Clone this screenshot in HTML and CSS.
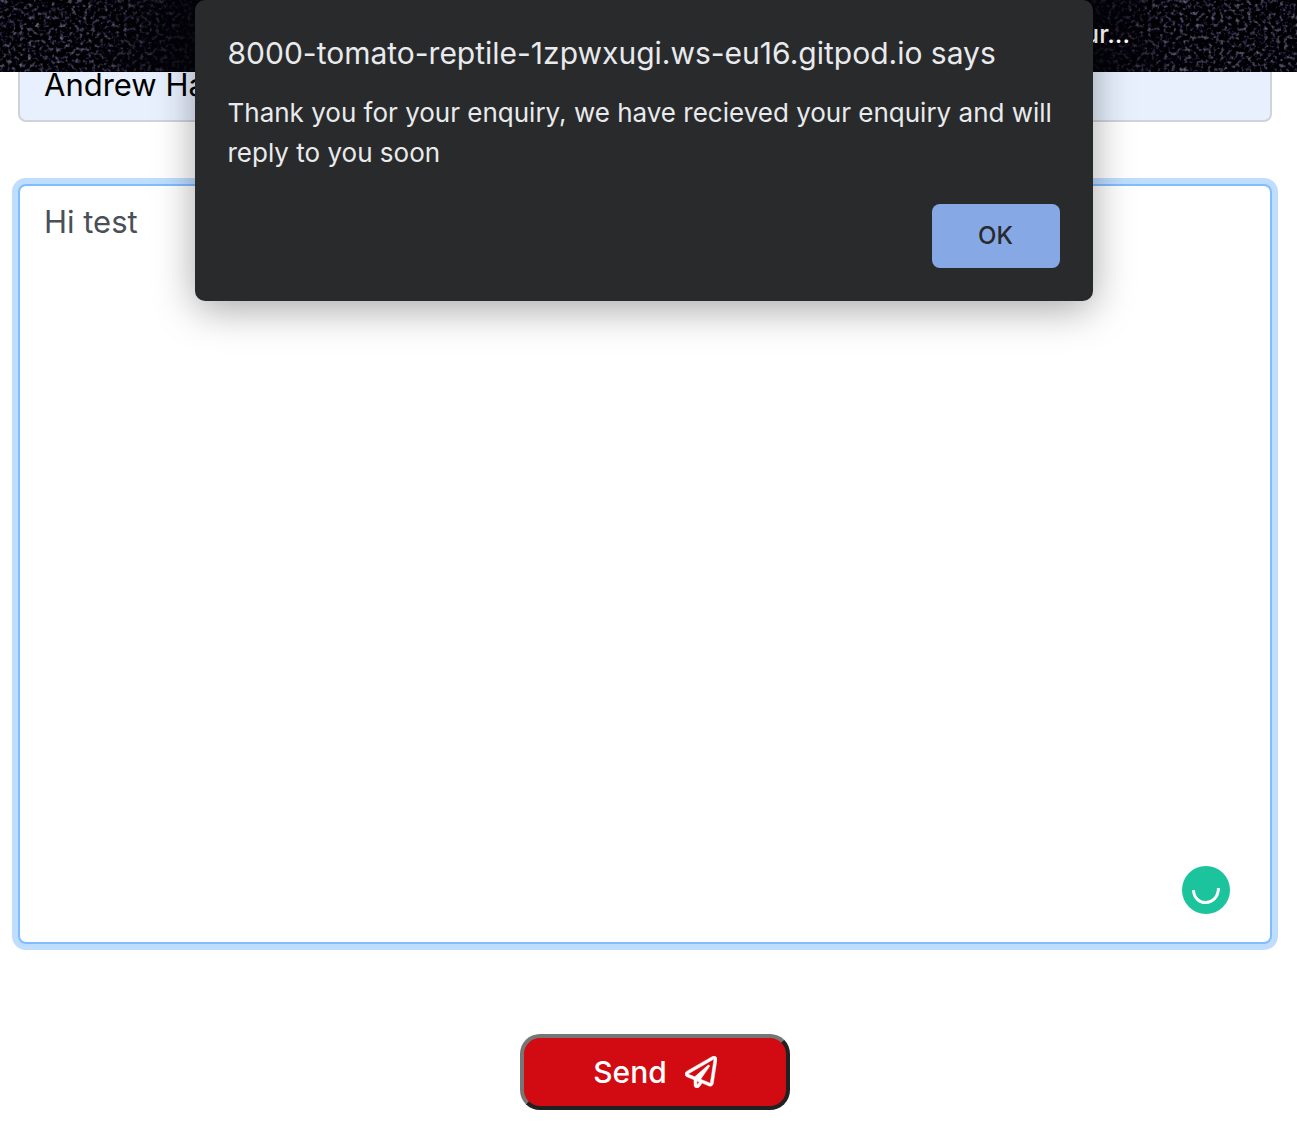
FILE: index.html
```
<!DOCTYPE html>
<html lang="en">
<head>
<meta charset="utf-8">
<meta name="viewport" content="width=device-width, initial-scale=1">
<title>Contact</title>
<link rel="stylesheet" href="styles.css">
</head>
<body>
<header class="site-header">
  <svg class="stars" aria-hidden="true">
    <filter id="grain" x="0" y="0" width="100%" height="100%" color-interpolation-filters="sRGB">
      <feTurbulence type="fractalNoise" baseFrequency="0.25" numOctaves="3" seed="8"/>
      <feColorMatrix values="1.1 0 0 0 -0.54  1.1 0 0 0 -0.55  1.1 0 0 0 -0.49  0 0 0 0 1"/>
      <feGaussianBlur stdDeviation="0.6"/>
    </filter>
    <rect width="100%" height="100%" filter="url(#grain)"/>
  </svg>
  <span class="header-text">ur...</span>
</header>
<main>
  <form class="contact-form">
    <input class="field" type="text" aria-label="Name" value="Andrew Ha">
    <div class="message">
      <textarea class="field field-message" aria-label="Message" spellcheck="false">Hi test</textarea>
      <svg class="checker" viewBox="0 0 48 48" aria-hidden="true">
        <circle cx="24" cy="24" r="24" fill="#1bc49c"/>
        <path d="M11.500 24C12 41 36 41 36.500 22" fill="none" stroke="#fff" stroke-width="3"/>
      </svg>
    </div>
    <button class="send" type="button">Send
      <svg viewBox="0 0 512 512" aria-hidden="true"><path fill="currentColor" stroke="currentColor" stroke-width="8" d="M440 6.500L24 246.400c-34.400 19.900-31.100 70.800 5.700 85.900L144 379.600V464c0 46.400 59.200 65.500 86.600 28.600l43.800-59.100 111.900 46.200c5.900 2.400 12.100 3.600 18.300 3.600 8.200 0 16.300-2.100 23.600-6.200 12.800-7.200 21.600-20 23.900-34.500l59.400-387.200c6.100-40.100-36.900-68.800-71.500-48.900zM192 464v-64.600l36.600 15.100L192 464zm212.600-28.700l-153.800-63.500L391 169.500c10.700-15.500-9.500-33.500-23.700-21.200L155.800 332.600 48 288 464 48l-59.400 387.300z"/></svg>
    </button>
  </form>
</main>
<dialog class="alert" open aria-labelledby="alert-title">
  <h1 class="alert-title" id="alert-title">8000-tomato-reptile-1zpwxugi.ws-eu16.gitpod.io says</h1>
  <p class="alert-text">Thank you for your enquiry, we have recieved your enquiry and will reply to you soon</p>
  <button class="alert-ok" type="button">OK</button>
</dialog>
</body>
</html>
```
FILE: styles.css
```
* {
  box-sizing: border-box;
}

body {
  margin: 0;
  background: #fff;
  font-family: Inter, "Liberation Sans", sans-serif;
}

.site-header {
  position: sticky;
  top: 0;
  z-index: 1;
  display: flex;
  align-items: center;
  justify-content: flex-end;
  height: 72px;
  padding: 0 167px 4px 0;
  background: #05040b;
  color: #fff;
}

.stars {
  position: absolute;
  inset: 0;
  width: 100%;
  height: 100%;
  -webkit-mask-image: linear-gradient(90deg, #000 6%, transparent 17%, transparent 83%, #000 91%);
  mask-image: linear-gradient(90deg, #000 6%, transparent 17%, transparent 83%, #000 91%);
}

.header-text {
  position: relative;
  font-size: 25px;
  font-weight: 500;
  line-height: 32px;
}

.contact-form {
  display: flex;
  flex-direction: column;
  margin-top: -26px;
  padding: 0 25px 17px 18px;
}

.field {
  display: block;
  width: 100%;
  height: 76px;
  padding: 12px 24px;
  border: 2px solid #ced4da;
  border-radius: 8px;
  background: #e8f0fe;
  color: #000;
  font: 400 31px/48px Inter, "Liberation Sans", sans-serif;
}

.message {
  position: relative;
  margin-top: 62px;
}

.field-message {
  height: 760px;
  border-color: #80bdff;
  background: #fff;
  box-shadow: 0 0 0 6px #bfdeff;
  color: #495057;
  outline: 0;
  resize: none;
}

.checker {
  position: absolute;
  right: 42px;
  bottom: 30px;
  width: 48px;
  height: 48px;
}

.send {
  display: flex;
  align-items: center;
  align-self: center;
  justify-content: center;
  gap: 18px;
  width: 270px;
  height: 76px;
  margin: 90px 0 0 20px;
  padding: 0;
  border: 4px solid;
  border-color: #767676 #212121 #212121 #767676;
  border-radius: 20px;
  background: #d20a11;
  color: #fff;
  font: 500 30px/48px Inter, "Liberation Sans", sans-serif;
}

.send svg {
  width: 32px;
  height: 32px;
}

.alert {
  position: absolute;
  top: 0;
  right: 10px;
  left: 0;
  z-index: 2;
  display: flex;
  flex-direction: column;
  width: 898px;
  max-width: 100%;
  margin: 0 auto;
  padding: 33px;
  border: 0;
  border-radius: 10px;
  background: #292a2c;
  box-shadow: 0 8px 40px rgba(0, 0, 0, 0.35);
  color: #e8eaed;
}

.alert-title {
  margin: 0;
  font-size: 30px;
  font-weight: 400;
  line-height: 40px;
}

.alert-text {
  margin: 20px 0 31px;
  font-size: 26px;
  line-height: 40px;
}

.alert-ok {
  align-self: flex-end;
  width: 128px;
  height: 64px;
  border: 0;
  border-radius: 8px;
  background: #86a9e5;
  color: #292a2c;
  font: 500 24px/32px Inter, "Liberation Sans", sans-serif;
}
```
